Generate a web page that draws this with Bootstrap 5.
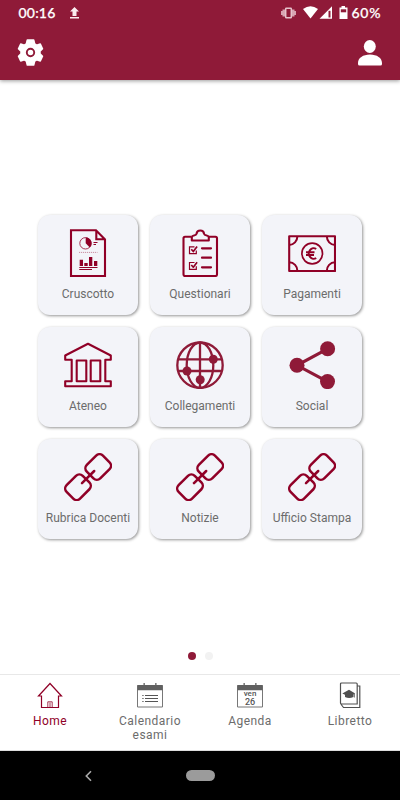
<!DOCTYPE html>
<html lang="it">
<head>
<meta charset="utf-8">
<meta name="viewport" content="width=device-width, initial-scale=1">
<title>Home</title>
<link href="https://cdn.jsdelivr.net/npm/bootstrap@5.3.0/dist/css/bootstrap.min.css" rel="stylesheet">
<style>
:root{--brand:#8f1a38;--ink:#900027;}
body{font-family:Roboto,"Liberation Sans",sans-serif;font-size:12px;line-height:14px;color:#666;background:#fff}
svg{display:block;flex:none}
.phone{width:400px;height:800px}
.app-header{background:var(--brand);height:80px;box-shadow:0 1px 4px rgba(0,0,0,.4)}
.status{height:26px;padding:0 18.5px;font:500 14px/26px Lato,sans-serif;color:#fff;-webkit-text-stroke:.25px #fff}
.status .clock{letter-spacing:.2px;width:37px;white-space:nowrap}
.status .batt{letter-spacing:.7px;width:30px;margin-left:3px;white-space:nowrap}
.tools{height:53px;padding:0 18px 0 17px}
.tiles{display:grid;grid-template-columns:repeat(3,100px);grid-auto-rows:100px;gap:12px;padding:135px 38px 0}
.tile{background:#f3f4f9;border-radius:12px;box-shadow:1px 1px 3px rgba(0,0,0,.42);padding-top:14px;color:#6c6c6c}
.tile span{margin-top:10px;white-space:nowrap}
.tile svg{width:48px;height:48px;fill:none;stroke:var(--ink);stroke-width:2.100}
.tile svg.chain{stroke-width:2.500}
.dots{height:36px;gap:9px}
.dots i{width:8px;height:8px;border-radius:50%;background:#f2f2f2}
.dots i.on{background:var(--brand)}
.tabs{height:77px;border-top:1px solid #e8e8e8;border-bottom:1px solid #ddd}
.tabs a{width:100px;padding-top:7px;color:#6c6c6c;letter-spacing:.46px}
.tabs a.active{color:var(--ink)}
.tabs .cap{margin-top:5px}
.tabs svg{width:28px;height:27px}
.day{width:28px;height:27px}
.day .leaf{left:0;top:7px;width:28px;color:#555;font-weight:500;letter-spacing:0}
.leaf div{font-size:8px;line-height:9px}
.leaf .num{font-size:9px;line-height:9px}
.sysnav{height:49px;background:#000;padding-left:84px}
.sysnav .pill{width:29px;height:11px;margin-left:93px;background:#9b9b9b}
</style>
</head>
<body>
<svg class="d-none"><symbol id="chain" viewBox="0 0 48 48"><rect x="-11.400" y="-9.500" width="22.800" height="19" rx="4.800" transform="translate(34.200 14) rotate(-45)"/><rect x="-11.400" y="-9.500" width="22.800" height="19" rx="4.800" transform="translate(14 34.200) rotate(-45)"/><path d="M18 30.200L30.200 18"/></symbol></svg>
<div class="phone d-flex flex-column overflow-hidden">
  <header class="app-header flex-shrink-0">
    <div class="status d-flex align-items-center">
      <span class="clock">00:16</span>
      <svg style="margin-left:14px" width="9" height="12" viewBox="0 0 9 12" fill="#fbecef"><path d="M4.500 0L9 4.500H6.500V9H2.500V4.500H0ZM0 10H9V11.500H0Z"/></svg>
      <svg class="ms-auto" width="68" height="14" viewBox="0 0 68 14" fill="#fff">
        <g fill="#d8a5b2"><path d="M0 5h1.500v4H0ZM1.500 3.500h2.500v7h-2.500ZM11 3.500H13.500v7h-2.500ZM13.500 5H15v4h-1.500Z"/><rect x="4.700" y="2.200" width="5.600" height="9.600" rx=".6" fill="none" stroke="#e6c2cb" stroke-width="1.500"/></g>
        <path d="M22 3Q29.500-2.500 37 3L29.500 12.500Z"/>
        <path d="M38.500 12.800L51 .300V12.800Z"/><path d="M47.500 4.800h2V11.500h-2Z" fill="#8f1a38"/>
        <path d="M58.500 1.500H60.500V0h3.500V1.500H66.500V13H58.500Z"/><path d="M59.800 3.300h5.400V6.300H59.800Z" fill="#8f1a38"/>
      </svg>
      <span class="batt">60%</span>
    </div>
    <div class="tools d-flex align-items-center justify-content-between">
      <svg width="27" height="27" viewBox="0 0 26 27"><path d="M9.800 1h6.400l1 4 2 1.200 3.600-1.200L25 9.800 22.500 12.300v2.400L25 17.200l-2.200 4.800-3.600-1.200L17.200 22l-1 4H9.800l-1-4-2-1.200L3.200 22 1 17.200l2.500-2.500v-2.400L1 9.800 3.200 5 6.800 6.200 8.800 5Z" fill="#fff" stroke="#fff" stroke-width="1.500" stroke-linejoin="round"/><circle cx="13" cy="13.500" r="3.700" fill="none" stroke="#8f1a38" stroke-width="1.900"/></svg>
      <svg width="24" height="26" viewBox="0 0 24 26" fill="#fff"><ellipse cx="11.800" cy="6.500" rx="6" ry="6.500"/><path d="M0 25V23C0 18 5 14.500 12 14.500S24 18 24 23V24Q24 25.500 22.500 25.500H1.500Q0 25.500 0 24Z"/></svg>
    </div>
  </header>

  <main class="flex-grow-1">
    <div class="tiles">
      <div class="tile d-flex flex-column align-items-center">
        <svg viewBox="0 0 48 48"><path d="M7 1.200H32L41 10.500V47H7ZM32.300 1.500V10.300H41"/><circle cx="21.500" cy="14.300" r="5.700" stroke-width=".8"/><path d="M21.700 14.300V8.500A5.800 5.800 0 0 1 25.800 18.400Z" fill="#900027" stroke="none"/><path d="M29.500 13.500h4M29.500 15.500h2.500" stroke-width="1.200"/><path d="M15 23.400H33.500" stroke-width=".7" stroke-dasharray="1.200 .8" opacity=".6"/><path d="M15.700 37V30.700H19V37ZM20.300 37V34H23.700V37ZM25 37V28H28.300V37ZM30 37V32H33.300V37Z" fill="#900027" stroke="none"/><path d="M15.300 38.500H33.500M15.300 40.500H28" stroke-width="1"/></svg>
        <span>Cruscotto</span></div>
      <div class="tile d-flex flex-column align-items-center">
        <svg viewBox="0 0 48 48" stroke-linejoin="round"><path d="M15.500 7.800H9Q7.500 7.800 7.500 9.300V45.500Q7.500 47 9 47H39.500Q41 47 41 45.500V9.300Q41 7.800 39.500 7.800H33"/><path d="M15.800 11.500V8.300Q16 6.800 17.800 6.500Q20.300 6 20.500 4.800Q21 1.500 24.300 1.500T28.100 4.800Q28.300 6 30.800 6.500Q32.600 6.800 32.800 8.300V11.500Z"/><g stroke-width="1.200" stroke-linejoin="miter"><path d="M18.500 17.800H13.500V24.600H20.300V21.500M18.500 33.500H13.500V40.300H20.300V37.200"/></g><path d="M15.300 20.300l2 2.200 3.800-5M15.300 36l2 2.200 3.800-5" stroke-width="1.700"/><path d="M26 19.300H35M26 28.700H35M26 38.300H35" stroke-width="2.200" stroke-linecap="round"/></svg>
        <span>Questionari</span></div>
      <div class="tile d-flex flex-column align-items-center">
        <svg viewBox="0 0 48 48" stroke-linejoin="round"><path d="M1.200 7.200H47V42H1.200Z"/><path d="M9.300 7.500A8.300 8.300 0 0 1 1.200 16M38.900 7.500A8.300 8.300 0 0 0 47 16M9.300 42A8.300 8.300 0 0 0 1.200 33.300M38.900 42A8.300 8.300 0 0 1 47 33.300" stroke-width="2"/><circle cx="24.200" cy="24.500" r="10.300" stroke-width="1.700"/><path d="M28.200 20A4.800 5.300 0 1 0 28.200 29M18 23.200H26.500M18 26H26" stroke-width="2"/></svg>
        <span>Pagamenti</span></div>
      <div class="tile d-flex flex-column align-items-center">
        <svg viewBox="0 0 48 48" stroke-linejoin="round"><path d="M24 2.800L1.200 14.500V18.700H7.700V40.200H1.200V45.200H46.800V40.200H41.300V18.700H46.800V14.500Z"/><path d="M12.700 19.500H22.300V40.200H12.700ZM26.700 19.500H36.300V40.200H26.700Z"/></svg>
        <span>Ateneo</span></div>
      <div class="tile d-flex flex-column align-items-center">
        <svg viewBox="0 0 48 48"><g stroke="#8f1a38" stroke-width="2.300"><circle cx="24" cy="24.200" r="22.700"/><ellipse cx="24" cy="24.200" rx="13.300" ry="22.700"/><path d="M24 1.500V47M2 18.400H46M2 30H46"/></g><g fill="#8f1a38" stroke="none"><circle cx="37.300" cy="18.300" r="4.500"/><circle cx="11" cy="30" r="4.500"/><circle cx="24.200" cy="38.700" r="4.500"/></g></svg>
        <span>Collegamenti</span></div>
      <div class="tile d-flex flex-column align-items-center">
        <svg viewBox="0 0 48 48"><path d="M39.500 7.800L9 24.300L39.500 40.700" stroke="#8f1a38" stroke-width="3.200"/><g fill="#8f1a38" stroke="none"><circle cx="9" cy="24.300" r="7.500"/><circle cx="39.600" cy="7.800" r="7.500"/><circle cx="39.500" cy="40.600" r="7.500"/></g></svg>
        <span>Social</span></div>
      <div class="tile d-flex flex-column align-items-center">
        <svg class="chain" stroke-linecap="round"><use href="#chain"/></svg>
        <span>Rubrica Docenti</span></div>
      <div class="tile d-flex flex-column align-items-center">
        <svg class="chain" stroke-linecap="round"><use href="#chain"/></svg>
        <span>Notizie</span></div>
      <div class="tile d-flex flex-column align-items-center">
        <svg class="chain" stroke-linecap="round"><use href="#chain"/></svg>
        <span>Ufficio Stampa</span></div>
    </div>
  </main>

  <div class="dots d-flex justify-content-center align-items-center flex-shrink-0"><i class="on"></i><i></i></div>

  <nav class="tabs d-flex flex-shrink-0 text-center">
    <a class="active d-flex flex-column align-items-center text-decoration-none">
      <svg viewBox="0 0 28 27" fill="none" stroke="#900027" stroke-width="1.200"><path d="M14 1.500L2.500 14H5.500V25.500H22.500V14H25.500Z" stroke="none"/><path d="M14 1.500L2.500 14H5.500V25.500H22.500V14H25.500Z"/><path d="M11.800 25V19.800H16.200V25M14 20.500V25" stroke-width=".8"/></svg>
      <span class="cap">Home</span></a>
    <a class="d-flex flex-column align-items-center text-decoration-none">
      <svg viewBox="0 0 28 27" fill="none" stroke="#777"><path d="M1.500 3.500H26.500V25H1.500Z"/><path d="M1.500 3H26.500V8.300H1.500ZM7.500 1h1.300v3H7.500ZM19.200 1h1.300v3H19.200Z" fill="#606060" stroke="none"/><path d="M9 13.500H22M9 16.500H22M9 19.500H22M6.300 13.500h1.300M6.300 16.500h1.300M6.300 19.500h1.300" stroke="#555" stroke-width="1.100"/></svg>
      <span class="cap">Calendario<br>esami</span></a>
    <a class="d-flex flex-column align-items-center text-decoration-none">
      <div class="day position-relative">
        <svg viewBox="0 0 28 27"><path d="M1.500 3.500H26.500V25H1.500Z" fill="none" stroke="#777"/><path d="M1.500 3H26.500V8.300H1.500ZM7.500 1h1.300v3H7.500ZM19.200 1h1.300v3H19.200Z" fill="#606060"/></svg>
        <div class="leaf position-absolute"><div>ven</div><div class="num">26</div></div>
      </div>
      <span class="cap">Agenda</span></a>
    <a class="d-flex flex-column align-items-center text-decoration-none">
      <svg viewBox="0 0 28 27" fill="none" stroke="#505050" stroke-width="1.200"><path d="M5.500 1H20.200Q21.200 1 21.200 2V22H5.500Q4.500 22 4.500 21V2Q4.500 1 5.500 1ZM21.500 4H23.800V25.500H7.500L4.800 22"/><path d="M6.300 11.500L13 7.800l6.200 3.700-1.700 1V15q-4.500 1.800-8.500 0V12.800Z" fill="#505050" stroke="none"/><path d="M18.400 12v3.500" stroke-width=".8"/></svg>
      <span class="cap">Libretto</span></a>
  </nav>

  <div class="sysnav d-flex align-items-center flex-shrink-0">
    <svg width="9" height="12" viewBox="0 0 9 12" fill="none" stroke="#aaa" stroke-width="1.600"><path d="M7 1.300L2.300 6L7 10.700"/></svg>
    <div class="pill rounded-pill"></div>
  </div>
</div>
<script src="https://cdn.jsdelivr.net/npm/bootstrap@5.3.0/dist/js/bootstrap.bundle.min.js"></script>
</body>
</html>
